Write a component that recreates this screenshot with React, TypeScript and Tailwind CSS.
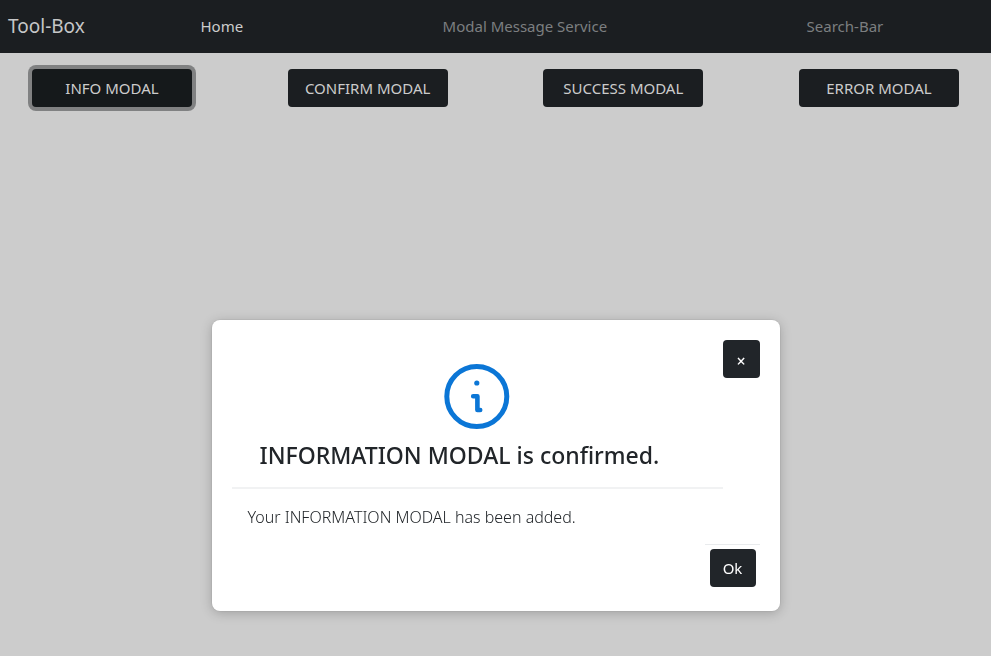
import React from "react";

const navLinks = [
  { label: "Home", active: true },
  { label: "Modal Message Service", active: false },
  { label: "Search-Bar", active: false },
];

const modalButtons = [
  { label: "INFO MODAL", focused: true },
  { label: "CONFIRM MODAL", focused: false },
  { label: "SUCCESS MODAL", focused: false },
  { label: "ERROR MODAL", focused: false },
];

function NavBar() {
  return (
    <nav className="flex h-[53px] items-center bg-[#1b1e21] px-2 pb-[2px]">
      <a href="#" className="mr-4 text-[19px] leading-6 whitespace-nowrap text-[#c6c7c8]">
        Tool-Box
      </a>
      <ul className="flex grow justify-around">
        {navLinks.map((link) => (
          <li key={link.label}>
            <a
              href="#"
              className={
                link.active
                  ? "text-[15px] leading-6 whitespace-nowrap text-[#cccccc]"
                  : "text-[15px] leading-6 whitespace-nowrap text-[#7c7e80]"
              }
            >
              {link.label}
            </a>
          </li>
        ))}
      </ul>
    </nav>
  );
}

function InfoIcon() {
  return (
    <svg
      className="size-[66px]"
      viewBox="0 0 66 66"
      fill="none"
      stroke="#0b76d6"
      role="img"
      aria-label="Information"
    >
      <circle cx="32.8" cy="32.5" r="30" strokeWidth="5" />
      <circle cx="32.800" cy="19" r="2.6" fill="#0b76d6" stroke="none" />
      <path d="M29.200 32.200H33.400V46H36.200" strokeWidth="4.600" strokeLinecap="round" strokeLinejoin="round" />
    </svg>
  );
}

function InfoModal() {
  return (
    <div className="fixed inset-x-0 top-[320px] flex justify-center px-4">
      <section
        role="dialog"
        aria-labelledby="modal-title"
        className="w-full max-w-[568px] rounded-lg bg-white px-5 pt-5 pb-6 shadow-[0_0_0_1px_rgba(0,0,0,0.04),0_2px_12px_rgba(0,0,0,0.22)]"
      >
        <header className="flex items-start">
          <div className="grow border-b-2 border-[#f1f2f3] pt-6 pb-[18px]">
            <div className="flex justify-center">
              <InfoIcon />
            </div>
            <h1 id="modal-title" className="mt-[11px] px-7 text-[23px] leading-7 font-medium text-[#212529]">
              INFORMATION MODAL is confirmed.
            </h1>
          </div>
          <button
            type="button"
            aria-label="Close"
            className="flex h-[38px] w-[37px] shrink-0 items-center justify-center rounded bg-[#212529] pt-1 text-base leading-6 font-medium text-white"
          >
            ×
          </button>
        </header>
        <p className="px-4 pt-4 pb-[15px] text-base leading-6 font-light text-[#212529]">
          Your INFORMATION MODAL has been added.
        </p>
        <footer className="ml-auto flex w-[55px] justify-end border-t border-[#e9ebed] pt-1 pr-1">
          <button
            type="button"
            className="h-[38px] w-[46px] rounded bg-[#212529] text-[15px] leading-6 text-white"
          >
            Ok
          </button>
        </footer>
      </section>
    </div>
  );
}

export default function App() {
  return (
    <div className="min-h-screen bg-[#cccccc] font-['Segoe_UI','Noto_Sans',sans-serif]">
      <NavBar />
      <main className="flex justify-between px-8 pt-4">
        {modalButtons.map((button) => (
          <button
            key={button.label}
            type="button"
            className={
              button.focused
                ? "h-[38px] w-40 rounded bg-[#15191b] text-[15px] leading-6 text-[#cccccc] ring-4 ring-[#808182]"
                : "h-[38px] w-40 rounded bg-[#1b1e21] text-[15px] leading-6 text-[#cccccc]"
            }
          >
            {button.label}
          </button>
        ))}
      </main>
      <InfoModal />
    </div>
  );
}
